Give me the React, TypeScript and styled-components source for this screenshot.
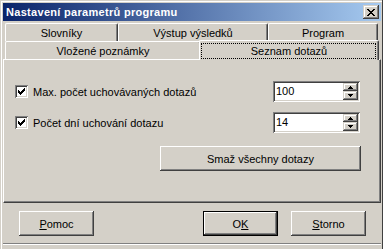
import styled, { createGlobalStyle } from "styled-components";

const GlobalStyle = createGlobalStyle`
  html, body {
    margin: 0;
    padding: 0;
    background: #d4d0c8;
  }
  body {
    font-family: "Liberation Sans", Arial, sans-serif;
    font-size: 11px;
    color: #000;
  }
`;

const raised = `
  box-shadow: inset -1px -1px #404040, inset 1px 1px #fff, inset -2px -2px #808080, inset 2px 2px #d4d0c8;
`;

const sunken = `
  box-shadow: inset 1px 1px #808080, inset -1px -1px #fff, inset 2px 2px #404040, inset -2px -2px #d4d0c8;
`;

const Window = styled.div`
  width: 383px;
  height: 249px;
  box-sizing: border-box;
  padding: 3px 1px 0 3px;
  border-right: 1px solid #404040;
  background: #d4d0c8;
  box-shadow: inset 1px 1px #d4d0c8, inset 2px 2px #fff;
  display: flex;
  flex-direction: column;
  overflow: hidden;
`;

const TitleBar = styled.div`
  height: 18px;
  flex-shrink: 0;
  display: flex;
  align-items: center;
  justify-content: space-between;
  padding: 0 2px 0 3px;
  margin-bottom: 2px;
  background: linear-gradient(to right, #0a246a, #a6caf0);
`;

const Title = styled.span`
  color: #fff;
  font-weight: bold;
  font-size: 11px;
  letter-spacing: 0.3px;
`;

const CloseButton = styled.div`
  width: 16px;
  height: 14px;
  background: #d4d0c8;
  box-shadow: inset -1px -1px #404040, inset 1px 1px #d4d0c8, inset -2px -2px #808080, inset 2px 2px #fff;
  display: flex;
  align-items: center;
  justify-content: center;
`;

const TabRow = styled.div`
  display: flex;
  align-items: flex-end;
  height: 18px;
  padding: 0 2px;
  flex-shrink: 0;
`;

const Tab = styled.div<{ $w: number; $active?: boolean }>`
  position: relative;
  width: ${(p) => p.$w}px;
  height: ${(p) => (p.$active ? 20 : 18)}px;
  margin-left: ${(p) => (p.$active ? -2 : 0)}px;
  margin-bottom: ${(p) => (p.$active ? -1 : 0)}px;
  z-index: ${(p) => (p.$active ? 2 : 1)};
  box-sizing: border-box;
  background: #d4d0c8;
  border-top: 1px solid #fff;
  border-left: 1px solid #fff;
  border-right: 1px solid #404040;
  border-radius: 2px 2px 0 0;
  box-shadow: inset -1px 0 #808080;
  display: flex;
  align-items: center;
  justify-content: center;
  padding-top: 1px;
  white-space: nowrap;
`;

const Focus = styled.span`
  position: absolute;
  left: 1px;
  right: 2px;
  top: 2px;
  bottom: 1px;
  border: 1px dotted #000;
`;

const Panel = styled.div`
  height: 144px;
  flex-shrink: 0;
  box-sizing: border-box;
  border-top: 1px solid #fff;
  border-left: 1px solid #fff;
  border-right: 1px solid #404040;
  border-bottom: 1px solid #404040;
  box-shadow: inset -1px -1px #808080;
  padding: 21px 20px 0 11px;
  display: flex;
  flex-direction: column;
`;

const OptionRow = styled.div<{ $gap?: number }>`
  display: flex;
  align-items: center;
  height: 21px;
  margin-top: ${(p) => p.$gap ?? 0}px;
`;

const CheckBox = styled.div`
  width: 13px;
  height: 13px;
  background: #fff;
  ${sunken}
  display: flex;
  align-items: center;
  justify-content: center;
`;

const Label = styled.span`
  margin-left: 5px;
  flex: 1;
  white-space: nowrap;
`;

const Spinner = styled.div`
  width: 87px;
  height: 21px;
  box-sizing: border-box;
  padding: 2px;
  background: #fff;
  ${sunken}
  display: flex;
`;

const SpinValue = styled.span`
  flex: 1;
  padding-left: 1px;
  line-height: 17px;
`;

const SpinButtons = styled.div`
  width: 15px;
  display: flex;
  flex-direction: column;
`;

const SpinButton = styled.div<{ $h: number }>`
  height: ${(p) => p.$h}px;
  background: #d4d0c8;
  box-shadow: inset -1px -1px #404040, inset 1px 1px #d4d0c8, inset -2px -2px #808080, inset 2px 2px #fff;
  display: flex;
  align-items: center;
  justify-content: center;
`;

const Button = styled.div<{ $w: number; $h?: number }>`
  width: ${(p) => p.$w}px;
  height: ${(p) => p.$h ?? 25}px;
  box-sizing: border-box;
  background: #d4d0c8;
  ${raised}
  display: flex;
  align-items: center;
  justify-content: center;
  white-space: nowrap;
`;

const WideButton = styled(Button)`
  align-self: flex-end;
  margin-top: 13px;
  margin-right: -1px;
`;

const DefaultButton = styled(Button)`
  border: 1px solid #000;
`;

const Footer = styled.div`
  display: flex;
  align-items: center;
  padding: 0 15px 0 16px;
  margin-top: 8px;
  gap: 13px;
`;

const Spacer = styled.div`
  flex: 1;
`;

const Separator = styled.div`
  margin-top: 7px;
  border-top: 1px solid #808080;
  border-bottom: 1px solid #fff;
`;

const CloseGlyph = () => (
  <svg width="8" height="7" viewBox="0 0 8 7" shapeRendering="crispEdges">
    <path
      d="M0 0h2v1H0zM6 0h2v1H6zM1 1h2v1H1zM5 1h2v1H5zM2 2h4v1H2zM3 3h2v1H3zM2 4h4v1H2zM1 5h2v1H1zM5 5h2v1H5zM0 6h2v1H0zM6 6h2v1H6z"
      fill="#000"
    />
  </svg>
);

const CheckGlyph = () => (
  <svg width="7" height="7" viewBox="0 0 7 7" shapeRendering="crispEdges">
    <path
      d="M6 0h1v1H6zM5 1h2v1H5zM0 2h1v1H0zM4 2h3v1H4zM0 3h2v1H0zM3 3h3v1H3zM0 4h5v1H0zM1 5h3v1H1zM2 6h1v1H2z"
      fill="#000"
    />
  </svg>
);

const Arrow = ({ up }: { up?: boolean }) => (
  <svg width="5" height="3" viewBox="0 0 5 3" shapeRendering="crispEdges">
    <path d={up ? "M2 0h1v1H2zM1 1h3v1H1zM0 2h5v1H0z" : "M0 0h5v1H0zM1 1h3v1H1zM2 2h1v1H2z"} fill="#000" />
  </svg>
);

const NumberBox = ({ value }: { value: string }) => (
  <Spinner>
    <SpinValue>{value}</SpinValue>
    <SpinButtons>
      <SpinButton $h={8}>
        <Arrow up />
      </SpinButton>
      <SpinButton $h={9}>
        <Arrow />
      </SpinButton>
    </SpinButtons>
  </Spinner>
);

const App = () => {
  return (
    <>
      <GlobalStyle />
      <Window>
        <TitleBar>
          <Title>Nastavení parametrů programu</Title>
          <CloseButton>
            <CloseGlyph />
          </CloseButton>
        </TitleBar>

        <TabRow>
          <Tab $w={113}>Slovníky</Tab>
          <Tab $w={150}>Výstup výsledků</Tab>
          <Tab $w={110}>Program</Tab>
        </TabRow>
        <TabRow>
          <Tab $w={196}>Vložené poznámky</Tab>
          <Tab $w={180} $active>
            Seznam dotazů
            <Focus />
          </Tab>
        </TabRow>

        <Panel>
          <OptionRow>
            <CheckBox>
              <CheckGlyph />
            </CheckBox>
            <Label>Max. počet uchovávaných dotazů</Label>
            <NumberBox value="100" />
          </OptionRow>
          <OptionRow $gap={10}>
            <CheckBox>
              <CheckGlyph />
            </CheckBox>
            <Label>Počet dní uchování dotazu</Label>
            <NumberBox value="14" />
          </OptionRow>
          <WideButton $w={201}>Smaž všechny dotazy</WideButton>
        </Panel>

        <Footer>
          <Button $w={75}>
            <u>P</u>omoc
          </Button>
          <Spacer />
          <DefaultButton $w={75}>
            O<u>K</u>
          </DefaultButton>
          <Button $w={75}>
            <u>S</u>torno
          </Button>
        </Footer>
        <Separator />
      </Window>
    </>
  );
};

export default App;
